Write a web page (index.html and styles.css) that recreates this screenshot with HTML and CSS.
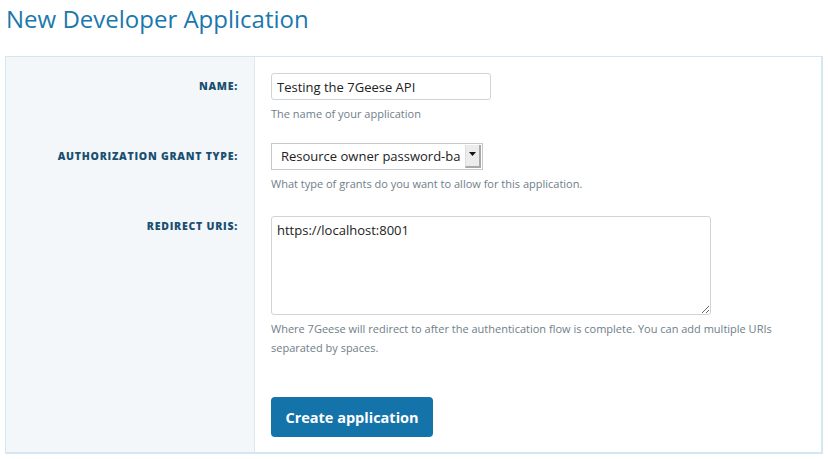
FILE: index.html
```html
<!DOCTYPE html>
<html>
<head>
<meta charset="utf-8">
<link rel="stylesheet" href="styles.css">
</head>
<body>
<div class="page">
  <h1 class="title">New Developer Application</h1>
  <form class="card">
    <div class="label-cell first"><label class="label">Name:</label></div>
    <div class="field-cell first">
      <input class="text-input" type="text" value="Testing the 7Geese API">
      <p class="help">The name of your application</p>
    </div>

    <div class="label-cell"><label class="label">Authorization grant type:</label></div>
    <div class="field-cell">
      <div class="select">
        <span class="select-text">Resource owner password-ba</span>
        <span class="select-arrow"><svg width="7" height="4" viewBox="0 0 7 4"><path d="M0 0h7L3.5 4z" fill="#111"/></svg></span>
      </div>
      <p class="help">What type of grants do you want to allow for this application.</p>
    </div>

    <div class="label-cell"><label class="label label-top">Redirect URIs:</label></div>
    <div class="field-cell">
      <textarea class="textarea">https://localhost:8001</textarea>
      <p class="help">Where 7Geese will redirect to after the authentication flow is complete. You can add multiple URIs separated by spaces.</p>
    </div>

    <div class="label-cell last"></div>
    <div class="field-cell last">
      <button class="btn" type="button">Create application</button>
    </div>
  </form>
</div>
</body>
</html>
```

FILE: styles.css
```css
html, body {
  margin: 0;
  padding: 0;
  background: #fff;
}
body {
  font-family: "Open Sans", "Liberation Sans", sans-serif;
  color: #333;
}
.page {
  padding: 0 5px 0 5px;
}
.title {
  margin: 0;
  padding: 4px 0 0 1px;
  height: 56px;
  box-sizing: border-box;
  font-size: 24px;
  line-height: 30px;
  font-weight: 400;
  color: #1b78ad;
}
.card {
  display: grid;
  grid-template-columns: 249px 1fr;
  border: 1px solid #d6e6f0;
  border-right-width: 2px;
  border-bottom-width: 2px;
  margin: 0;
}
.label-cell {
  background: #f3f7fa;
  border-right: 1px solid #dde9f1;
  padding: 0 16px 0 0;
  text-align: right;
}
.label {
  display: block;
  font-family: "Open Sans", sans-serif;
  font-weight: 800;
  font-size: 10.5px;
  letter-spacing: 0.75px;
  text-transform: uppercase;
  color: #1a4f71;
  line-height: 27px;
}
.label-top {
  line-height: 20px;
}
.field-cell {
  padding: 0 16px 23px 16px;
}
.label-cell.first, .field-cell.first {
  padding-top: 16px;
}
.field-cell.first {
  padding-bottom: 20px;
}
.text-input {
  display: block;
  box-sizing: border-box;
  width: 220px;
  height: 27px;
  border: 1px solid #cfd4d8;
  border-radius: 3px;
  padding: 0 5px;
  font-family: "Open Sans", sans-serif;
  font-size: 13px;
  color: #222;
  background: #fff;
  margin: 0;
}
.help {
  margin: 4px 0 0;
  font-size: 11px;
  line-height: 19px;
  color: #6f7e89;
}
.select {
  display: flex;
  align-items: stretch;
  box-sizing: border-box;
  width: 212px;
  height: 27px;
  border: 1px solid #c9c9c9;
  background: #fff;
}
.select-text {
  flex: 1;
  white-space: nowrap;
  font-size: 13px;
  line-height: 25px;
  padding-left: 9px;
  color: #222;
}
.select-arrow {
  flex: 0 0 auto;
  width: 13px;
  margin: 1px 1px 1px 0;
  background: #ececec;
  border-left: 1px solid #ddd;
  border-right: 2px solid #a9a9a9;
  border-bottom: 2px solid #a9a9a9;
  display: flex;
  align-items: flex-start;
  justify-content: center;
  padding-top: 7px;
  box-sizing: content-box;
}
.textarea {
  display: block;
  box-sizing: border-box;
  width: 440px;
  height: 99px;
  border: 1px solid #cfd4d8;
  border-radius: 3px;
  padding: 4px 5px;
  margin: 0;
  font-family: "Open Sans", sans-serif;
  font-size: 13px;
  line-height: 18px;
  color: #222;
  resize: both;
}
.field-cell.last, .label-cell.last {
  padding-top: 17px;
  padding-bottom: 15px;
}
.btn {
  display: block;
  width: 162px;
  height: 40px;
  background: #1474aa;
  border: 0;
  border-radius: 4px;
  color: #fff;
  font-family: "Open Sans", sans-serif;
  font-weight: 700;
  font-size: 14.5px;
  padding: 0;
}
```
